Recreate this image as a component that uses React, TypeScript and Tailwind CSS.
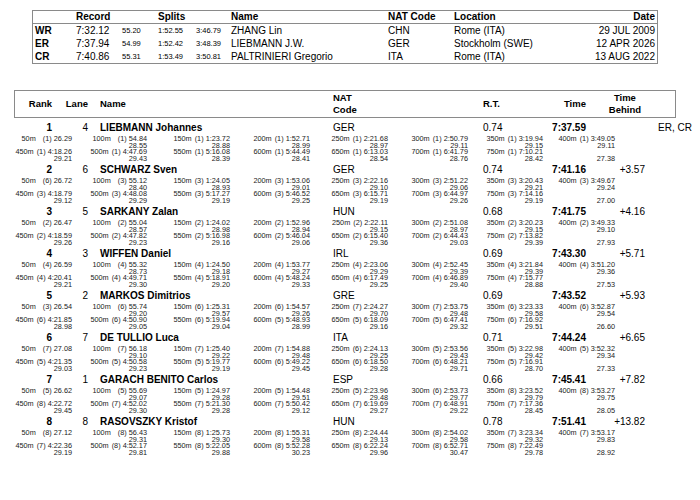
const records = [
  ['WR', '7:32.12', '55.20', '1:52.55', '3:46.79', 'ZHANG Lin', 'CHN', 'Rome (ITA)', '29 JUL 2009'],
  ['ER', '7:37.94', '54.99', '1:52.42', '3:48.39', 'LIEBMANN J.W.', 'GER', 'Stockholm (SWE)', '12 APR 2026'],
  ['CR', '7:40.86', '55.31', '1:53.49', '3:50.81', 'PALTRINIERI Gregorio', 'ITA', 'Rome (ITA)', '13 AUG 2022'],
]

interface Athlete {
  rank: number
  lane: number
  name: string
  nat: string
  rt: string
  time: string
  behind: string
  rec?: string
  splits: string[]
  last: string
}

// each split: "rank cumulative lap"
const athletes: Athlete[] = [
  {
    rank: 1, lane: 4, name: 'LIEBMANN Johannes', nat: 'GER', rt: '0.74', time: '7:37.59', behind: '', rec: 'ER, CR',
    splits: ['1 26.29', '1 54.84 28.55', '1 1:23.72 28.88', '1 1:52.71 28.99', '1 2:21.68 28.97', '1 2:50.79 29.11', '1 3:19.94 29.15', '1 3:49.05 29.11',
      '1 4:18.26 29.21', '1 4:47.69 29.43', '1 5:16.08 28.39', '1 5:44.49 28.41', '1 6:13.03 28.54', '1 6:41.79 28.76', '1 7:10.21 28.42'],
    last: '27.38',
  },
  {
    rank: 2, lane: 6, name: 'SCHWARZ Sven', nat: 'GER', rt: '0.74', time: '7:41.16', behind: '+3.57',
    splits: ['6 26.72', '3 55.12 28.40', '3 1:24.05 28.93', '3 1:53.06 29.01', '3 2:22.16 29.10', '3 2:51.22 29.06', '3 3:20.43 29.21', '3 3:49.67 29.24',
      '3 4:18.79 29.12', '3 4:48.08 29.29', '3 5:17.27 29.19', '3 5:46.52 29.25', '3 6:15.71 29.19', '3 6:44.97 29.26', '3 7:14.16 29.19'],
    last: '27.00',
  },
  {
    rank: 3, lane: 5, name: 'SARKANY Zalan', nat: 'HUN', rt: '0.68', time: '7:41.75', behind: '+4.16',
    splits: ['2 26.47', '2 55.04 28.57', '2 1:24.02 28.98', '2 1:52.96 28.94', '2 2:22.11 29.15', '2 2:51.08 28.97', '2 3:20.23 29.15', '2 3:49.33 29.10',
      '2 4:18.59 29.26', '2 4:47.82 29.23', '2 5:16.98 29.16', '2 5:46.04 29.06', '2 6:15.40 29.36', '2 6:44.43 29.03', '2 7:13.82 29.39'],
    last: '27.93',
  },
  {
    rank: 4, lane: 3, name: 'WIFFEN Daniel', nat: 'IRL', rt: '0.69', time: '7:43.30', behind: '+5.71',
    splits: ['4 26.59', '4 55.32 28.73', '4 1:24.50 29.18', '4 1:53.77 29.27', '4 2:23.06 29.29', '4 2:52.45 29.39', '4 3:21.84 29.39', '4 3:51.20 29.36',
      '4 4:20.41 29.21', '4 4:49.71 29.30', '4 5:18.91 29.20', '4 5:48.24 29.33', '4 6:17.49 29.25', '4 6:46.89 29.40', '4 7:15.77 28.88'],
    last: '27.53',
  },
  {
    rank: 5, lane: 2, name: 'MARKOS Dimitrios', nat: 'GRE', rt: '0.69', time: '7:43.52', behind: '+5.93',
    splits: ['3 26.54', '6 55.74 29.20', '6 1:25.31 29.57', '6 1:54.57 29.26', '7 2:24.27 29.70', '7 2:53.75 29.48', '6 3:23.33 29.58', '6 3:52.87 29.54',
      '6 4:21.85 28.98', '6 4:50.90 29.05', '6 5:19.94 29.04', '5 5:48.93 28.99', '5 6:18.09 29.16', '5 6:47.41 29.32', '6 7:16.92 29.51'],
    last: '26.60',
  },
  {
    rank: 6, lane: 7, name: 'DE TULLIO Luca', nat: 'ITA', rt: '0.71', time: '7:44.24', behind: '+6.65',
    splits: ['7 27.08', '7 56.18 29.10', '7 1:25.40 29.22', '7 1:54.88 29.48', '6 2:24.13 29.25', '5 2:53.56 29.43', '5 3:22.98 29.42', '5 3:52.32 29.34',
      '5 4:21.35 29.03', '5 4:50.58 29.23', '5 5:19.77 29.19', '6 5:49.22 29.45', '6 6:18.50 29.28', '6 6:48.21 29.71', '5 7:16.91 28.70'],
    last: '27.33',
  },
  {
    rank: 7, lane: 1, name: 'GARACH BENITO Carlos', nat: 'ESP', rt: '0.66', time: '7:45.41', behind: '+7.82',
    splits: ['5 26.62', '5 55.69 29.07', '5 1:24.97 29.28', '5 1:54.48 29.51', '5 2:23.96 29.48', '6 2:53.73 29.77', '8 3:23.52 29.79', '8 3:53.27 29.75',
      '8 4:22.72 29.45', '7 4:52.02 29.30', '7 5:21.30 29.28', '7 5:50.42 29.12', '7 6:19.69 29.27', '7 6:48.91 29.22', '7 7:17.36 28.45'],
    last: '28.05',
  },
  {
    rank: 8, lane: 8, name: 'RASOVSZKY Kristof', nat: 'HUN', rt: '0.78', time: '7:51.41', behind: '+13.82',
    splits: ['8 27.12', '8 56.43 29.31', '8 1:25.73 29.30', '8 1:55.31 29.58', '8 2:24.44 29.13', '8 2:54.02 29.58', '7 3:23.34 29.32', '7 3:53.17 29.83',
      '7 4:22.36 29.19', '8 4:52.17 29.81', '8 5:22.05 29.88', '8 5:52.28 30.23', '8 6:22.24 29.96', '8 6:52.71 30.47', '8 7:22.49 29.78'],
    last: '28.92',
  },
]

const splitCols = 'grid grid-cols-[72px_75px_83px_80px_78px_80px_75px_72px]'
const rowCols = 'grid grid-cols-[52px_36px_12px_233px_150px_40px_63px_59px_13px_auto]'

function Split({ index, value }: { index: number; value: string }) {
  const [rank, time, lap] = value.split(' ')
  return (
    <div className="flex flex-col items-end">
      <div className="whitespace-nowrap h-[6.5px]">
        {(index + 1) * 50}m
        <span className={time.includes(':') ? 'ml-[3px]' : 'ml-[7px]'}>({rank})</span> {time}
      </div>
      <div className="h-[6.5px]">{lap}</div>
    </div>
  )
}

function AthleteRow({ a }: { a: Athlete }) {
  return (
    <div className="h-[42px]">
      <div className={`${rowCols} h-[12px] items-center text-[10px] leading-[12px]`}>
        <div className="text-right font-bold">{a.rank}</div>
        <div className="text-right">{a.lane}</div>
        <div />
        <div className="font-bold whitespace-nowrap">{a.name}</div>
        <div>{a.nat}</div>
        <div>{a.rt}</div>
        <div className="text-right font-bold">{a.time}</div>
        <div className="text-right">{a.behind}</div>
        <div />
        <div className="whitespace-nowrap">{a.rec}</div>
      </div>
      <div className="pt-[2px] text-[7.3px] leading-[6.5px] text-[#222]">
        <div className={splitCols}>
          {a.splits.slice(0, 8).map((s, i) => (
            <Split key={i} index={i} value={s} />
          ))}
        </div>
        <div className={splitCols}>
          {a.splits.slice(8).map((s, i) => (
            <Split key={i} index={i + 8} value={s} />
          ))}
          <div className="flex flex-col items-end">
            <div className="h-[6.5px]" />
            <div className="h-[6.5px]">{a.last}</div>
          </div>
        </div>
      </div>
    </div>
  )
}

export default function App() {
  return (
    <div className="w-[700px] h-[500px] bg-white text-black font-['Liberation_Sans',Arial,sans-serif] overflow-hidden">
      {/* records */}
      <div className="ml-[32px] mt-[10px] w-[626px] border border-[#8a8a8a]">
        <div className="grid grid-cols-[43px_46px_36px_38px_35px_157px_66px_1fr_100px] h-[13px] items-center text-[10px] font-bold leading-[12px] border-b border-[#8a8a8a]">
          <div />
          <div>Record</div>
          <div />
          <div>Splits</div>
          <div />
          <div>Name</div>
          <div>NAT Code</div>
          <div>Location</div>
          <div className="text-right pr-[2px]">Date</div>
        </div>
        {records.map((r) => (
          <div
            key={r[0]}
            className="grid grid-cols-[43px_46px_36px_38px_35px_157px_66px_1fr_100px] h-[13px] items-center text-[10px] leading-[12px]"
          >
            <div className="font-bold pl-[2px]">{r[0]}</div>
            <div>{r[1]}</div>
            <div className="text-[7.5px]">{r[2]}</div>
            <div className="text-[7.5px]">{r[3]}</div>
            <div className="text-[7.5px]">{r[4]}</div>
            <div>{r[5]}</div>
            <div>{r[6]}</div>
            <div>{r[7]}</div>
            <div className="text-right pr-[2px]">{r[8]}</div>
          </div>
        ))}
      </div>

      {/* results header */}
      <div className="ml-[14px] mt-[26px] w-[662px] h-[28px] border border-[#8a8a8a]">
        <div className="grid grid-cols-[37px_36px_12px_233px_150px_40px_63px_59px] h-full items-center text-[9.5px] font-bold leading-[12px]">
          <div className="text-right">Rank</div>
          <div className="text-right">Lane</div>
          <div />
          <div>Name</div>
          <div>
            NAT
            <br />
            Code
          </div>
          <div>R.T.</div>
          <div className="text-right">Time</div>
          <div className="flex justify-end pr-[4px]">
            <div className="text-center">
              Time
              <br />
              Behind
            </div>
          </div>
        </div>
      </div>

      <div className="pt-[4px]">
        {athletes.map((a) => (
          <AthleteRow key={a.rank} a={a} />
        ))}
      </div>
    </div>
  )
}
